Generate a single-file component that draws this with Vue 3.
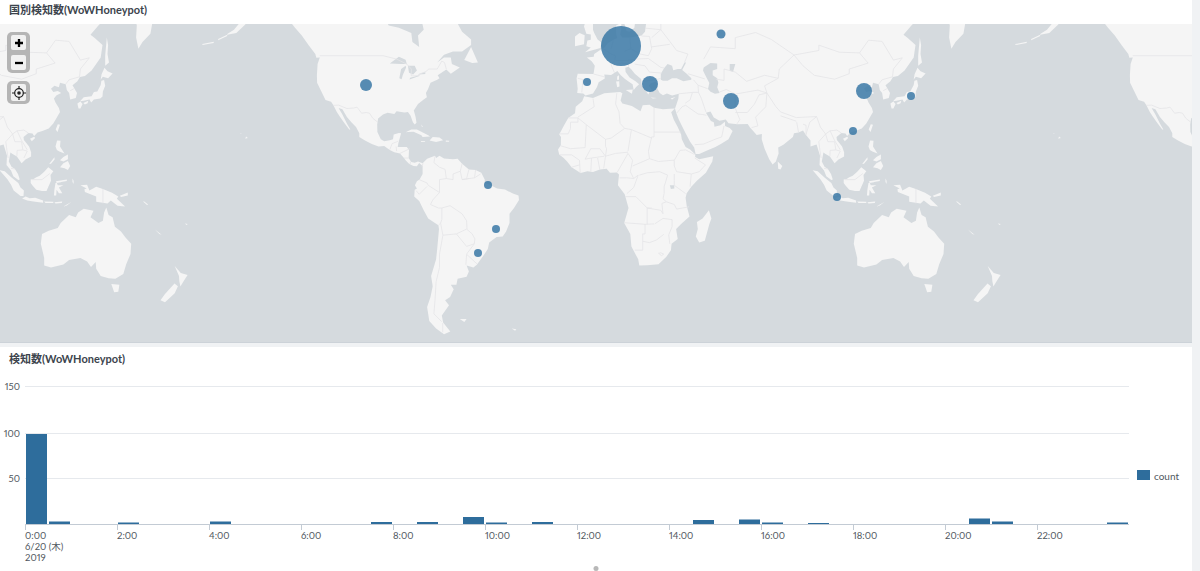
<script setup>
// lon,lat outlines, projected to web mercator below
const land = [
  // north america
  '-164,54.7 -160,55.2 -156.5,57 -153.5,58.7 -152,60 -149,60.5 -146,61 -141,60 -137,58.5 -134,56.5 -131,54.5 -128,52 -125,49.5 -124.5,48.4 -123,48.5 -124,46.5 -124.3,43 -124.2,40.5 -122.5,37.8 -120.5,34.5 -118,33.8 -117,32.5 -115.5,30 -114,28 -112,25.5 -110,23 -109.5,23 -111,25.5 -113,29 -114.7,31.5 -113,31 -111,28 -109,26 -107,24 -105.5,21.5 -105.5,20 -103,18.5 -100,17 -97,16 -94.5,16.2 -92,14.5 -90,13.5 -87.5,13 -85.7,11 -85,10 -83.5,8.5 -81.5,7.5 -80,7.4 -79,8.8 -77.5,7.5 -77.5,8.7 -79.5,9.5 -81,8.9 -82.5,9.2 -83.7,11 -83.5,14.5 -84.5,15.8 -87.5,15.8 -88.5,15.8 -88.2,17.5 -87.6,19.5 -87,21.5 -88,21.6 -90.3,21 -90.6,19 -92,18.6 -94.5,18.2 -96,19 -97.5,22 -97.6,25 -97.2,27.5 -95,29 -93,29.7 -90,29.2 -89,30.3 -85.5,29.8 -84,30 -82.8,28.5 -81.8,26 -81,25.1 -80.2,25.8 -80.6,28 -81.4,30.5 -79.5,33 -77,34.6 -75.6,35.5 -76,37 -75,38.5 -74,40.5 -71,41.5 -70,42 -70.8,43 -67,44.8 -65,43.5 -61,45.5 -64.5,46.5 -65,48.5 -68,48.5 -71,47 -68,49.3 -64,50.2 -60,50.2 -56,52 -56,53.5 -60,55.5 -62,57.5 -65,60 -70,61 -78,62 -78,58.5 -77,56 -79.5,54.5 -79,51.5 -82,52.8 -82.5,55.2 -88,56.5 -92.5,57 -94.5,59 -94,61 -110,70 -150,70 -165,66 -160,65 -158,59 -158,58 -161,56 -164,54.9',
  '-59,47.7 -56,51.5 -53,47 -55.5,46.8',
  '-85,21.9 -82.5,23.1 -80,23 -75,20.7 -74.2,20.2 -77.5,19.9 -78,20.7 -81.5,22.1 -84,22',
  '-74.4,18.5 -73,19.9 -70,19.8 -68.4,18.6 -71.5,17.8',
  '-67.2,18.5 -65.6,18.4 -65.8,18 -67.2,18',
  '-78.3,18.3 -76.3,18.2 -76.5,17.9 -78,17.9',
  '-78,25.2 -77.4,24.2 -77.8,24',
  '-175,52 -170,52.6 -170,52.9 -175,52.3',
  '-168,53.3 -164,54.4 -164,54.7 -168,53.6',
  '-156,19.2 -154.9,19.6 -155.7,20.2',
  '-158.2,21.3 -157.7,21.3 -157.9,21.6',
  // south america
  '-77.5,8.7 -75.5,10.7 -72,12 -71.5,11 -70,12 -68,10.8 -64,10.5 -62,10.7 -60,8.5 -57,6 -54,5.8 -51.5,4.5 -50,1.5 -50,0 -48,-0.7 -44.5,-2.5 -41,-2.9 -37.5,-4.7 -35,-5.5 -34.8,-7.5 -37,-11 -39,-13.5 -39,-17.5 -40.5,-21 -42,-23 -44.7,-23.2 -48,-25.5 -48.6,-28 -50.5,-30.5 -53.5,-34 -55,-35 -58,-34.3 -57,-36.5 -58,-38.3 -62,-39 -62.5,-41 -65,-41 -63.7,-42.5 -65.3,-45 -67.5,-46 -65.8,-47.5 -69,-50.5 -68.4,-52.4 -65.2,-54.8 -68,-55.5 -71.5,-54 -74.5,-52 -75.5,-48 -74,-45 -73,-41.5 -73.7,-38 -71.5,-32 -71,-28 -70.2,-20 -70.5,-18.4 -75,-15.5 -77,-12 -79,-8 -81.2,-6 -81,-3 -80,-2.5 -80.9,-1 -80,0.8 -78.8,1.5 -77.5,4 -77.5,7',
  '-61,-51.5 -58,-51.5 -59,-52.3',
  '-38,-54 -36,-54.2 -36.5,-54.6',
  // africa
  '-5.9,35.8 -2,35.2 3,36.9 10,37.3 11,36.9 10.2,34.3 11,33.2 15.2,32.3 19,30.3 20,32.5 23,32.7 25,31.6 29,31 32,31.2 34.2,31.3 32.6,29.9 33.7,27 35.5,24 37,21 37.3,19 39,15.7 41,14.7 43.3,12.5 43.2,11.5 45,10.5 51.2,11.8 50.8,9.5 48,4.5 44,1 41.5,-1.7 39.5,-4.5 39,-6.5 39.5,-10 40.7,-14.7 37,-17.8 34.8,-19.9 35.5,-24 32.8,-26 32.5,-28.5 30.5,-31 27,-33.8 22,-34.2 18.5,-34.3 18,-32 15,-27 14.5,-22 11.8,-17.5 13.7,-11 12,-5 9,-1 9.5,3.8 8.5,4.7 5.5,4.5 4,6.3 1,6 -2,4.8 -4.5,5.2 -7.5,4.4 -11.5,7 -13.5,9.5 -15,11 -17,12.5 -17.5,14.7 -16.3,16.5 -16.2,20 -17,21 -15,24.5 -13,27.7 -10,29.5 -9.7,32 -6.8,34',
  '49.3,-12 50.4,-15.5 49.5,-18 47.5,-24.8 45,-25.5 43.5,-23 44.4,-20 44,-17 46.5,-15.5',
  // eurasia
  '-9,37 -6.3,36.8 -5.4,36.1 -2,36.8 -0.3,39 0.5,40.7 3.2,41.9 3,43.2 6,43.1 8.8,44.4 10.3,43 12.3,41.7 15.5,40 16,38 17,39 18.4,40 16.8,41 14.2,42.3 12.4,44 12.3,45.4 13.7,45.7 14.8,45 16.5,43.5 19.3,41.8 19.5,40 21,38 22.5,36.5 23.1,37.6 24,38 22.8,39.5 23.5,40.3 26,40.9 26.5,39.5 26.5,38.5 27.5,37 29,36.2 30.7,36.8 33,36.1 36,36.7 35.8,35 35,33 34.3,31.3 34.9,29.5 36,27 37.2,24.8 39,21.5 41,18 42.8,15.5 43.4,12.8 45,12.8 49,14.5 52.2,15.8 55,17.2 58,19 59.8,22.4 58.5,23.7 56.5,24.5 56.4,26.2 54.5,24.8 51.8,24.2 51.5,26 50.2,26.5 48,29.7 50,30.2 51.5,27.9 54,26.6 56.8,27 58,25.6 62,25.2 66.5,25.3 67.5,23.8 69,22.3 70.5,20.8 72.8,21.2 72.7,19 74,15 76,10.5 77.5,8.1 79,9.5 80.2,13 80,15.5 82.3,16.7 86.5,20 87,21.5 89,21.8 91,22.6 92.3,20.8 94.3,18.5 94.3,16 97,16.8 98.5,12 98.3,8 100.3,5.5 101.3,3 103.5,1.3 104.2,1.5 103.4,4 102,6.2 100.5,7.2 99.3,9.5 100,13.4 101,12.7 102.9,11.6 105,8.7 106.7,10.4 109.2,11.6 109.2,13.5 108.3,16 106,18.7 105.8,20 108,21.6 109.8,21.4 110.5,20.4 112,21.8 114.2,22.4 117,23.5 119,25.5 120.7,28 122,30 121.5,31.5 120,33.5 119.3,35 120.5,36.2 122.5,37 121,37.7 119,37.3 118,38.5 119.5,39.5 121.5,39 122,40.5 124.5,40 125,38 126,37 126.5,34.7 129,35.2 129.5,37 127.5,39.7 129.7,41 130.8,42.4 133,42.8 136,44.5 140,48.5 140.8,52 137.5,53.8 135.5,54.7 139,57 143,59.3 151,59.5 155,59.5 156,57 155.7,54 156.7,51 158.5,52.8 162,55 163,58 170,60 180,65 180,75 30,72 5,62 5,59 7,58 8.5,58 10.5,59.3 11.3,58.5 12.8,55.7 14.3,55.5 16.3,56.5 16.8,58.5 18.5,62 24,60 29,60 23.5,59.3 24.3,58 21.5,57.5 21,55.5 19.5,54.5 14.5,54 11,54 10,54.8 10.5,56 10.5,57.7 8.2,57 8.2,55 8.7,53.9 7,53.4 4.5,52.5 3,51.3 1.5,50.8 -1.5,49.5 -1.7,48.7 -4.7,48.5 -2.5,47.3 -1.2,46 -1.8,43.4 -8.8,43.5 -9.3,42 -8.8,38.5',
  '-5.5,50 1.3,51.2 1.7,52.7 0,53.5 -1.5,55.2 -2,56 -2,57.6 -4,57.7 -3,58.6 -5,58.6 -6,56.8 -5,55 -3,54.8 -3,53.4 -4.5,53.2 -5,51.7 -3,51.3',
  '-6,52.2 -10,51.7 -10,54.3 -8,55.2 -5.7,54.6',
  '8.7,39 9.7,39.2 9.6,41 8.2,40.9',
  '8.6,41.5 9.5,41.5 9.5,43 8.7,42.6',
  '12.5,38 15.6,38.2 15.2,36.7',
  '23.5,35.4 26.3,35.2 24.5,35',
  '32.3,35 34.5,35.6 33,34.6',
  '79.8,9.5 81.8,7.5 81,6 80,6.3',
  // japan and east asia
  '130.9,34 132.5,35.5 136,35.8 137,37.3 138.5,37.5 140,39.8 140.3,41.2 141.5,41.4 142,39.5 141,37.5 140.8,35.7 139.8,35 137,34.6 135.8,33.6 135,34.6 132.5,34.2',
  '132.3,33.4 134.5,34.2 134.2,33.3 133,32.8',
  '129.7,33.2 131,33.9 132,33 131,31.3 130.2,31.3',
  '140,41.6 140.4,43.3 141.7,45.4 143,44.3 145.3,43.6 143.3,42 141,42.5',
  '142,46 142,49 142.7,54 143.3,52 143,49.5 143.7,47',
  '120.1,23 121,25.2 122,25 120.9,22',
  '108.7,19.2 110.5,20.1 111,19.5 109.5,18.2',
  '120,16 120.7,18.5 122.2,18.4 122,16 124,13 121.7,13.8 120.6,14.4',
  '122,7 123.5,8.7 125.5,9.7 126.5,7.5 125.5,5.7 124,6.5',
  '122,10 123.5,11.5 125.5,12.5 125.5,10.5 123.5,9.5',
  '117.2,8.4 119.5,11.3 119.6,10.4 118,8.5',
  // indonesia, new guinea
  '109,1.5 110.3,1.8 111.3,2.5 113,3.2 115,5 116.8,7 119,5.2 117.8,3.5 118,1 116,-3.5 114,-3.5 111.5,-3 110,-1.3 109,0',
  '95.3,5.6 97.5,5.2 100.5,2.5 103.5,0 104.5,-2 106,-3.3 105.8,-5.8 104.5,-5.8 101.5,-3.3 100.3,-0.8 98.7,1.7',
  '105.2,-6.8 106.8,-6 108.5,-6.7 111,-6.5 114.5,-7.7 114.5,-8.7 111,-8.3 107.5,-7.7',
  '115,-8.2 119,-8.3 119,-8.8 115.5,-8.8',
  '119.5,-8.5 123,-8.2 122.8,-8.8 120,-9',
  '123.5,-10.3 127,-8.4 125,-9.9',
  '119.3,-5.5 120.3,-5.5 120.5,-3 121.5,-4.5 123,-4.5 121.5,-2 123.5,-1 121,-1 120.2,0.8 125,1.5 125,0.9 120,0 119.5,-3',
  '127.5,2 128,1 128,-0.5 127.5,0.5',
  '131,-1 134,-0.8 135,-3.3 138,-1.7 141,-2.6 145,-4.3 147.8,-6 147.2,-7 150.8,-10.3 147.5,-10 144.5,-7.7 143,-9 138,-8.3 138,-6 133,-4 132.8,-2.8 133.8,-2.4',
  '148.5,-5.6 152,-4.2 152,-5.5 149,-6.2',
  '159,-8 161,-9.5 160.5,-9.7 159,-8.4',
  '164,-20.2 167,-22.3 166,-22',
  '177.3,-17.6 178.6,-17.8 178,-18.3',
  // australia, nz
  '114,-22 113.5,-26 115,-31.5 115,-34.3 118,-35 123.5,-33.9 126,-32.3 131,-31.5 134,-32.8 135.7,-34.8 137.8,-33 138,-35.5 140,-38 143.5,-38.8 146.5,-39 150,-37.3 151.3,-33.8 153.2,-30 153.5,-26 151,-23.5 149,-21 146.3,-19 145.3,-15 143.5,-14 142.5,-10.8 141.5,-13 141,-16.5 139,-17.5 135.5,-15 136.8,-12.2 132.5,-11.3 130,-13 129,-15 126,-14 122.3,-17.5 121,-19.5 117,-20.7',
  '144.7,-40.8 148.3,-41 147.8,-43.3 146,-43.5',
  '172.8,-34.5 175.5,-37 178.5,-37.7 177,-39.5 175.3,-41.6 174.8,-39.8 174.7,-38',
  '172.7,-40.6 174.2,-41.5 172.8,-43.8 171,-45 168.5,-46.6 166.5,-46 168.5,-44',
]

const water = [
  '-92,46.7 -88,48.7 -85,47.8 -84.5,46.5 -87,46.5',
  '-87.8,42 -87,45 -85,46 -84.8,45.5 -86.3,43 -86.8,41.7',
  '-84,46 -81,46 -80,44.5 -81.7,43.2 -83.5,43.8',
  '-83.3,41.6 -79,42.8 -79,43 -83,42.2',
  '-79.5,43.3 -76.3,44 -76.3,43.4 -79,43.2',
  '28,41.5 28,43.5 29.5,45.3 31,46.5 33,46 33.5,44.6 35.5,45 37,45 38.5,47 39.2,47 37.5,44.7 39.5,43.5 41.5,42 41.5,41.5 38,41 35,42 33,42 31,41.2 29,41.2',
  '47,45.5 50,46.8 53,46.7 53,45 51,44.5 51,43 53,42 53.5,40.5 53,39 54,37 52,36.7 50,37.4 48.9,38.4 49.5,40.4 47.7,43 46.7,44.5',
  '58.5,46.5 61,46.5 60,44 58.5,44.5',
  '32,-1 34,-1 34,-2.5 32.5,-2.7',
]

const borders = [
  // north and central america
  '-123,49 -95,49 -89,48 -84.5,46.5 -82.5,45 -82.5,42.8 -79,42.9 -79,43.3 -76,44.2 -74.7,45 -71,45 -69,47.4 -67.8,47 -67,45',
  '-117,32.5 -114.7,32.6 -111,31.3 -108,31.5 -106.5,31.8 -104.5,29.5 -102.5,29.8 -101,29.5 -99.5,27.5 -97.2,25.9',
  '-92,14.6 -91,17.2 -89,17.9 -88.3,18.3', '-89.2,15.9 -89,14', '-87.5,13 -83.2,15', '-85.7,11 -83.7,11', '-83,8.3 -82.8,9.5', '-77.3,8.7 -77.8,7.2',
  // south america
  '-72,11.8 -72.5,9 -70,7 -67.5,6 -67,2', '-67,2 -70,1.5 -70,-4.2', '-79,1.5 -75.5,0 -75,-1 -70,-4.2', '-80.3,-3.4 -79,-5 -75.5,-1.5',
  '-70,-4.2 -73,-7.5 -74,-9.5 -70.5,-11 -69,-11', '-69,-11 -69,-16 -69.5,-17.5 -70.4,-18.3', '-69.5,-17.5 -68.5,-22.5',
  '-68.5,-22.5 -70,-30 -70,-35 -71.5,-40 -72,-46 -72.5,-50 -69,-52.2', '-68.6,-52.6 -68.6,-55', '-69,-11 -65.3,-10 -60,-13.5 -58,-16.5 -57.8,-20',
  '-58,-20 -62.5,-22 -58,-27 -54.6,-26 -54.3,-24 -55.5,-22 -58,-20', '-68.5,-22.5 -62.5,-22', '-54.6,-26 -58,-30 -58.3,-34', '-57.8,-30.2 -53.4,-33.7',
  '-60,8.5 -60.8,5.2 -64,4 -64,1.5 -67,2', '-60.8,5.2 -60,1.5 -57,2', '-57,6 -58,2', '-54,5.8 -54.5,2.3', '-60,1.5 -54.5,2.3 -51.8,4',
  // africa
  '-2,35 -1.5,32 -8.7,28', '-13,27.7 -8.7,27.7 -8.7,26 -12,26 -12,23.4 -13,21.3 -17,21.3', '-5,25 -8.7,27.7', '-5,25 -5.5,15.5 -12,15 -16.5,16.3',
  '8.5,36.9 8,33 9.5,30', '9.5,30 10,25.5 12,23.5', '12,23.5 6,19.5 3.5,19 3.5,16', '3.5,19 -5,25', '25,31.6 25,22', '25,22 25,20 24,20', '24,19.5 15,23', '15,23 12,23.5',
  '25,22 37,22', '24,20 22.5,14 23,10.7', '15,23 13.5,14', '3.5,11.8 8,13 13.5,13.5', '3.5,16 4,15 3.5,11.8', '-5.5,10.5 -3,15 1,15 3.5,11.8', '2.7,6.4 3.5,11.8',
  '8.7,4.7 13.5,13', '13.5,13 15.5,10', '15.5,7.5 19,9 23,10.7', '15.5,10 14.5,5 16,2', '9.8,2.3 13,2.3 16,2', '16,2 18,3.5', '18.5,3.5 22,4.5 27.5,5',
  '23,10.7 27,9.5 33,10 34,10', '34,10 34,7.5 35,5', '34,10 36.5,14.3', '36.5,14.3 39,14.5 43,12.5', '43,11 47.8,8 45,5 41.5,4', '35,5 41.5,4 41,-1.6', '34,4 34,1 34,-1', '34,-1 39,-4.7',
  '27.5,5 31,3.5 30,0 29.5,-1.4 29.5,-4.5 29,-7 30.5,-8.3', '30.5,-8.3 34,-9.5 35,-11.5 40.5,-10.5', '18,3.5 16,-2 13,-4.7', '12.3,-6 17,-6 22,-11 24,-11', '22,-11 28,-12 29,-13.5 28.5,-9 30.5,-8.3',
  '22,-11 22,-18', '11.8,-17.3 21,-18 25,-17.8', '21,-18 21,-22 20,-22 20,-28.5', '16.5,-28.5 20,-28.5', '20,-25 23,-25.5 26,-24.5 29.3,-22.2', '25.3,-17.8 29,-15.5 33,-16 33,-19 31.5,-22.4', '31.5,-22.4 32,-26',
  '-16.7,12.4 -11.5,12.4 -8,10 -7.7,4.4', '-11.5,7 -8,8', '-3,5 -2.7,11', '1,6 0,11', '-5.5,10.5 -2.7,11 3,11.8', '28,-29.5 29.3,-30 28.3,-30.6 27,-29.7 28,-29.5',
  // europe
  '-1.8,43.4 3,42.5', '-8.8,42 -6.5,41.6 -7,37.2', '2.6,51 6,49.5 8,49 7.6,47.6 6,46.3 7.5,43.8', '7,53.3 6,51', '14.3,54 14.7,51', '12,50.3 14.7,51 18.8,49.5 22.5,49', '8,47.6 13,47.6 17,48',
  '7,46 10.5,46.8 13.7,46.5 13.7,45.7', '19.5,54.4 23,54.3 24,51 22.5,49', '17,48 22.5,48.2', '16.5,46.5 21,46 23,44', '22.5,48.2 28,45.5 29.5,45.3', '23,44 28.5,43.7', '20,41 26,41.5 28,42',
  '24,51.5 32,52.2', '24,54 28,56', '28,59.5 28,56 32,53 35,50.5 40,49.5 38.5,47', '21,56.4 28,56',
  // asia
  '36,36.7 42,37.2 44.7,37.2 44.5,39.7 42.5,41.5', '42,37.2 41,34.5 38.8,33.3', '35,29.5 37.5,32 39,32.5', '39,32.5 44.5,29.2 46.5,29 48.2,28.7', '44.7,37.2 46,35 48,30',
  '53.9,37.3 57,38.2 61,36.6', '61,36.6 61,31.4 63,27 61.6,25.2', '61,29.8 66.3,29.8 69.5,33 71.5,36.3 75,37', '61,36.6 66,37.3 71,38 75,37', '52.5,41.7 56,41.3 56,45 61,44 66,41 70,42 74,43 80,42',
  '47,48 50,51.5 61,51 61,54 70,55.3 77,53.5 87,49.2', '87,49.2 80.5,45 80,42', '80,42 74,39.5 75,37', '87,49.2 91,46 96,43 105,41.7 111.5,43.5 111.5,45 119.8,46.8 116,49.8', '87,49.2 98,50.5 98,52 107,50 116,49.8',
  '116,49.8 120,53.3 126,53 131,47.7 135,48.4 131,45 130.6,42.5', '130.6,42.5 126,41.5 124.4,40', '126.5,37.8 128.4,38.6', '68.2,23.8 71,24.5 70,28 74.5,32 75,37', '75,37 79,32 81,30 88,27.8 92,28 97,28.2', '81,28.5 88,26.4',
  '88.2,26 89,22', '91,25.2 92.3,24.8 92.3,20.8', '92.3,21 94,26 97,28.2 98.7,24 101,21.2', '101,21.2 103,22.5 106,22.8 108,21.6', '101,21.2 98,18 98.5,14 99,11', '101,21.2 102,18 105,18 105.5,14.5', '103,22.5 105,18.5 107.5,14.5',
  '102.9,11.7 103,14.3 105.5,14.5 107.5,14 106,11', '100.3,6.5 102,6.2', '43,16.7 47,17 52,19 55,20', '55,20 56,24.5', '40,43.5 47.5,41.8', '44.5,39.7 48.8,38.5', '109.5,1.5 114,1.5 117.5,4.2', '141,-2.6 141,-9',
]

const SCALE = 2.258
const R = SCALE * 180 / Math.PI

function toXY(pair) {
  const [lon, lat] = pair.split(',').map(Number)
  const merc = Math.log(Math.tan(Math.PI / 4 + (lat * Math.PI) / 360))
  return `${(913 + (lon - 139.7) * SCALE).toFixed(1)} ${(159 - R * merc).toFixed(1)}`
}
function toPath(line, closed) {
  return 'M' + line.split(' ').map(toXY).join('L') + (closed ? 'Z' : '')
}

const landPath = land.map((l) => toPath(l, true)).join('')
const waterPath = water.map((l) => toPath(l, true)).join('')
const borderPath = borders.map((l) => toPath(l, false)).join('')
const worldCopies = [-813, 0, 813]

const markers = [
  { x: 621, y: 22, r: 20 },
  { x: 650, y: 60, r: 8 },
  { x: 731, y: 77, r: 8 },
  { x: 864, y: 67, r: 8 },
  { x: 366, y: 61, r: 6 },
  { x: 721, y: 10, r: 4.5 },
  { x: 587, y: 58, r: 4 },
  { x: 911, y: 72, r: 4 },
  { x: 853, y: 107, r: 4 },
  { x: 837, y: 173, r: 4 },
  { x: 488, y: 161, r: 4 },
  { x: 496, y: 205, r: 4 },
  { x: 478, y: 229, r: 4 },
]

// half hour buckets, the rest are empty
const BASE_Y = 524
const bars = [
  [0, 90], [1, 2.5], [4, 1.5], [8, 2.5], [15, 2], [17, 2], [19, 7], [20, 1.5], [22, 2],
  [29, 4], [31, 4.5], [32, 1.5], [34, 1], [41, 5.5], [42, 2.5], [47, 1.5],
].map(([i, h]) => ({ i, x: 25 + i * 23 + 1, h, y: BASE_Y - h }))

const gridLines = [
  { label: '150', y: 386 },
  { label: '100', y: 433 },
  { label: '50', y: 478 },
]
const ticks = Array.from({ length: 12 }, (_, i) => ({ x: 25 + i * 92, label: `${i * 2}:00` }))
</script>

<template>
  <div class="dashboard">
    <section class="panel">
      <h2 class="panel-title map-title">国別検知数(WoWHoneypot)</h2>
      <div class="map">
        <svg class="map-svg" viewBox="0 0 1192 318">
          <g v-for="dx in worldCopies" :key="dx" :transform="`translate(${dx} 0)`">
            <path :d="landPath" class="land" />
            <path :d="waterPath" class="water" />
            <path :d="borderPath" class="border" />
          </g>
          <circle v-for="m in markers" :key="m.x" :cx="m.x" :cy="m.y" :r="m.r" class="marker" />
        </svg>

        <div class="map-controls">
          <div class="control-group">
            <button class="control-btn">
              <svg width="8" height="8" viewBox="0 0 9 9"><path d="M3.2 0h2.6v3.2H9v2.6H5.800V9H3.200V5.800H0V3.200h3.200z" /></svg>
            </button>
            <button class="control-btn">
              <svg width="8" height="8" viewBox="0 0 9 9"><path d="M0 3.200h9v2.600H0z" /></svg>
            </button>
          </div>
          <div class="control-group">
            <button class="control-btn locate-btn">
              <svg width="14" height="14" viewBox="0 0 14 14">
                <circle cx="7" cy="7" r="4.300" fill="none" stroke="#222" stroke-width="1.200" />
                <circle cx="7" cy="7" r="1.800" fill="#222" />
                <path d="M7 0v3M7 11v3M0 7h3M11 7h3" stroke="#222" stroke-width="1.200" />
              </svg>
            </button>
          </div>
        </div>
      </div>
    </section>

    <section class="panel chart-panel">
      <h2 class="panel-title">検知数(WoWHoneypot)</h2>
      <svg class="chart" viewBox="0 376 1192 195">
        <g v-for="g in gridLines" :key="g.label">
          <line x1="25" x2="1129" :y1="g.y + 0.5" :y2="g.y + 0.5" class="grid" />
          <text x="20" :y="g.y + 4" text-anchor="end" class="axis-text">{{ g.label }}</text>
        </g>

        <rect v-for="b in bars" :key="b.i" :x="b.x" :y="b.y" width="21" :height="b.h" class="bar" />

        <line x1="25" x2="1129" y1="524.5" y2="524.5" class="axis" />
        <g v-for="t in ticks" :key="t.label">
          <line :x1="t.x + 0.5" :x2="t.x + 0.5" y1="524" y2="530" class="axis" />
          <text :x="t.x" y="539" class="axis-text">{{ t.label }}</text>
        </g>
        <text x="25" y="550" class="axis-text">6/20 (木)</text>
        <text x="25" y="561" class="axis-text">2019</text>

        <rect x="1137" y="470" width="13" height="10" class="bar" />
        <text x="1154" y="479.500" class="legend-text">count</text>

        <circle cx="596" cy="568.500" r="2.500" fill="#b8b8b8" />
      </svg>
    </section>
  </div>
</template>

<style scoped>
.dashboard {
  height: 571px;
  overflow: hidden;
  padding-right: 8px;
  display: flex;
  flex-direction: column;
  gap: 4px;
  background: #f0f2f4;
  font-family: Lato, "Noto Sans CJK JP", sans-serif;
  color: #3c444d;
}

.panel {
  background: #fff;
}

.panel-title {
  margin: 0;
  padding: 2px 0 0 9px;
  font-size: 11px;
  font-weight: 700;
  line-height: 16px;
  color: #3c444d;
}

.map-title {
  height: 22px;
}

.map {
  position: relative;
  height: 318px;
  background: #d5dade;
  border-bottom: 1px solid #ccd2d8;
}

.map-svg {
  display: block;
  width: 1192px;
  height: 318px;
}

.land {
  fill: #f5f5f5;
}

.water {
  fill: #d5dade;
}

.border {
  fill: none;
  stroke: #e4e5e7;
  stroke-width: 0.8;
  stroke-linejoin: round;
}

.marker {
  fill: #3a78a6;
  fill-opacity: 0.85;
}

.map-controls {
  position: absolute;
  top: 8px;
  left: 7px;
  display: flex;
  flex-direction: column;
  gap: 8px;
}

.control-group {
  display: flex;
  flex-direction: column;
  gap: 5px;
  padding: 3px 4px;
  background: #b5b5b5;
  border-radius: 5px;
}

.control-btn {
  display: flex;
  align-items: center;
  justify-content: center;
  width: 15px;
  height: 15px;
  padding: 0;
  border: none;
  border-radius: 2px;
  background: #f1f1f1;
}

.locate-btn {
  height: 17px;
}

.chart-panel {
  flex: 1;
  padding-top: 2px;
}

.chart {
  display: block;
  width: 1192px;
  height: 195px;
  margin-top: 9px;
}

.grid {
  stroke: #e6e9ed;
}

.axis {
  stroke: #c3cbd4;
}

.axis-text {
  font-size: 9.500px;
  font-feature-settings: "pnum";
  fill: #50575e;
}

.legend-text {
  font-size: 10px;
  fill: #50575e;
}

.bar {
  fill: #2e6d9c;
}
</style>
